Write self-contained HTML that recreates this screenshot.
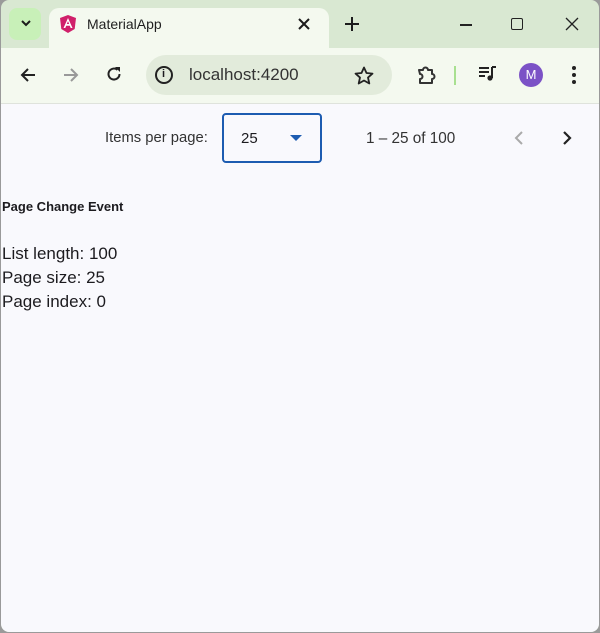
<!DOCTYPE html>
<html><head><style>
*{margin:0;padding:0;box-sizing:border-box}
body{width:600px;height:633px;background:#9a9a9a;font-family:"Liberation Sans",sans-serif;overflow:hidden;position:relative}
.win{position:absolute;left:1px;top:0;width:598px;height:632px;background:#d9e8d2;border-radius:8px 8px 8px 8px;overflow:hidden}
.tabbtn{position:absolute;left:8px;top:8px;width:32px;height:32px;background:#c8f0b8;border-radius:8px}
.tab{position:absolute;left:48px;top:8px;width:280px;height:48px;background:#f4f9ef;border-radius:10px 10px 0 0}
.toolbar{position:absolute;left:0;top:48px;width:598px;height:55px;background:#f4f9ef}
.omni{position:absolute;left:145px;top:55px;width:246px;height:40px;background:#e2ebdb;border-radius:20px}
.content{position:absolute;left:0;top:103px;width:598px;height:529px;background:#f9f9fd;border-top:1px solid #dfe3dc;border-radius:0 0 8px 8px}
.t{position:absolute;color:#1c1b1f;white-space:nowrap}
</style></head><body>
<div class="win">
<div class="tabbtn"></div>
<svg style="position:absolute;left:19px;top:18px" width="12" height="10"><path d="M2 3l4 4 4-4" stroke="#1c1c1c" stroke-width="2" fill="none"/></svg>
<div class="tab"></div>
<svg style="position:absolute;left:58px;top:14px" width="18" height="20" viewBox="0 0 18 20"><path d="M9 1L1 4l1.3 11L9 19l6.7-4L17 4z" fill="#d0206a"/><path d="M9 4L4.5 14h1.8l.9-2.3h3.6l.9 2.3h1.8zM7.8 10L9 7.2 10.2 10z" fill="#fff"/></svg>
<div class="t" style="left:86px;top:16px;font-size:14px;color:#1f1f1f">MaterialApp</div>
<svg style="position:absolute;left:296px;top:17px" width="14" height="14"><path d="M2 2l10 10M12 2L2 12" stroke="#1c1c1c" stroke-width="2"/></svg>
<svg style="position:absolute;left:343px;top:16px" width="16" height="16"><path d="M8 1v14M1 8h14" stroke="#1c1c1c" stroke-width="2"/></svg>
<div style="position:absolute;left:459px;top:24px;width:12px;height:1.5px;background:#222"></div>
<div style="position:absolute;left:510px;top:18px;width:12px;height:12px;border:1.5px solid #222;border-radius:2px"></div>
<svg style="position:absolute;left:564px;top:17px" width="14" height="14"><path d="M1 1l12 12M13 1L1 13" stroke="#222" stroke-width="1.3"/></svg>
<div class="toolbar"></div>
<svg style="position:absolute;left:18px;top:67px" width="18" height="16"><path d="M16 8H3M9 2L3 8l6 6" stroke="#222" stroke-width="2" fill="none"/></svg>
<svg style="position:absolute;left:61px;top:67px" width="18" height="16"><path d="M2 8h13M9 2l6 6-6 6" stroke="#999" stroke-width="2" fill="none"/></svg>
<svg style="position:absolute;left:104px;top:65px" width="18" height="18"><path d="M14.5 9A5.5 5.5 0 1 1 12.5 4.8" stroke="#222" stroke-width="2" fill="none"/><path d="M10 2h5v5z" fill="#222"/></svg>
<div class="omni"></div>
<div style="position:absolute;left:154px;top:66px;width:18px;height:18px;border:2px solid #222;border-radius:50%"></div>
<div class="t" style="left:161px;top:68px;font-size:11px;font-weight:bold">i</div>
<div class="t" style="left:188px;top:65px;font-size:17px;color:#333">localhost:4200</div>
<svg style="position:absolute;left:353px;top:66px" width="20" height="19" viewBox="0 0 20 19"><path d="M10 1.5l2.5 5.5 6 .6-4.5 4 1.3 5.9L10 14.5 4.7 17.5 6 11.6 1.5 7.6l6-.6z" stroke="#222" stroke-width="1.8" fill="none" stroke-linejoin="round"/></svg>
<svg style="position:absolute;left:414px;top:64px" width="22" height="22"><path d="M4 6h4a2.5 2.5 0 0 1 5 0h4v4a2.5 2.5 0 0 1 0 5v4H5v-4a2.5 2.5 0 0 0 0-5z" stroke="#333" stroke-width="2" fill="none" stroke-linejoin="round"/></svg>
<div style="position:absolute;left:453px;top:66px;width:2px;height:19px;background:#a8e090"></div>
<svg style="position:absolute;left:477px;top:65px" width="20" height="18"><path d="M1 3h10M1 7h10M1 11h6" stroke="#222" stroke-width="2"/><path d="M14 2v11" stroke="#222" stroke-width="2"/><circle cx="12" cy="13" r="2.6" fill="#222"/><path d="M14 2h4" stroke="#222" stroke-width="2"/></svg>
<div style="position:absolute;left:518px;top:63px;width:24px;height:24px;border-radius:50%;background:#7b52c6;color:#fff;font-size:13px;text-align:center;line-height:24px">M</div>
<svg style="position:absolute;left:569px;top:65px" width="8" height="20"><circle cx="4" cy="3" r="2" fill="#222"/><circle cx="4" cy="10" r="2" fill="#222"/><circle cx="4" cy="17" r="2" fill="#222"/></svg>
<div class="content"></div>
<div class="t" style="left:104px;top:130px;font-size:14.8px;color:#333">Items per page:</div>
<div style="position:absolute;left:221px;top:113px;width:100px;height:50px;border:2px solid #1d5cb1;border-radius:4px"></div>
<div class="t" style="left:240px;top:130px;font-size:15px">25</div>
<svg style="position:absolute;left:289px;top:135px" width="12" height="7"><path d="M0 0h12L6 6z" fill="#1d5cb1"/></svg>
<div class="t" style="left:365px;top:130px;font-size:15.3px;color:#333">1 – 25 of 100</div>
<svg style="position:absolute;left:512px;top:130px" width="12" height="16"><path d="M9 2L3 8l6 6" stroke="#aaa" stroke-width="2" fill="none"/></svg>
<svg style="position:absolute;left:560px;top:130px" width="12" height="16"><path d="M3 2l6 6-6 6" stroke="#222" stroke-width="2.2" fill="none"/></svg>
<div class="t" style="left:1px;top:199px;font-size:13px;font-weight:bold">Page Change Event</div>
<div class="t" style="left:1px;top:244px;font-size:17px">List length: 100</div>
<div class="t" style="left:1px;top:268px;font-size:17px">Page size: 25</div>
<div class="t" style="left:1px;top:292px;font-size:17px">Page index: 0</div>
</div>
</body></html>
